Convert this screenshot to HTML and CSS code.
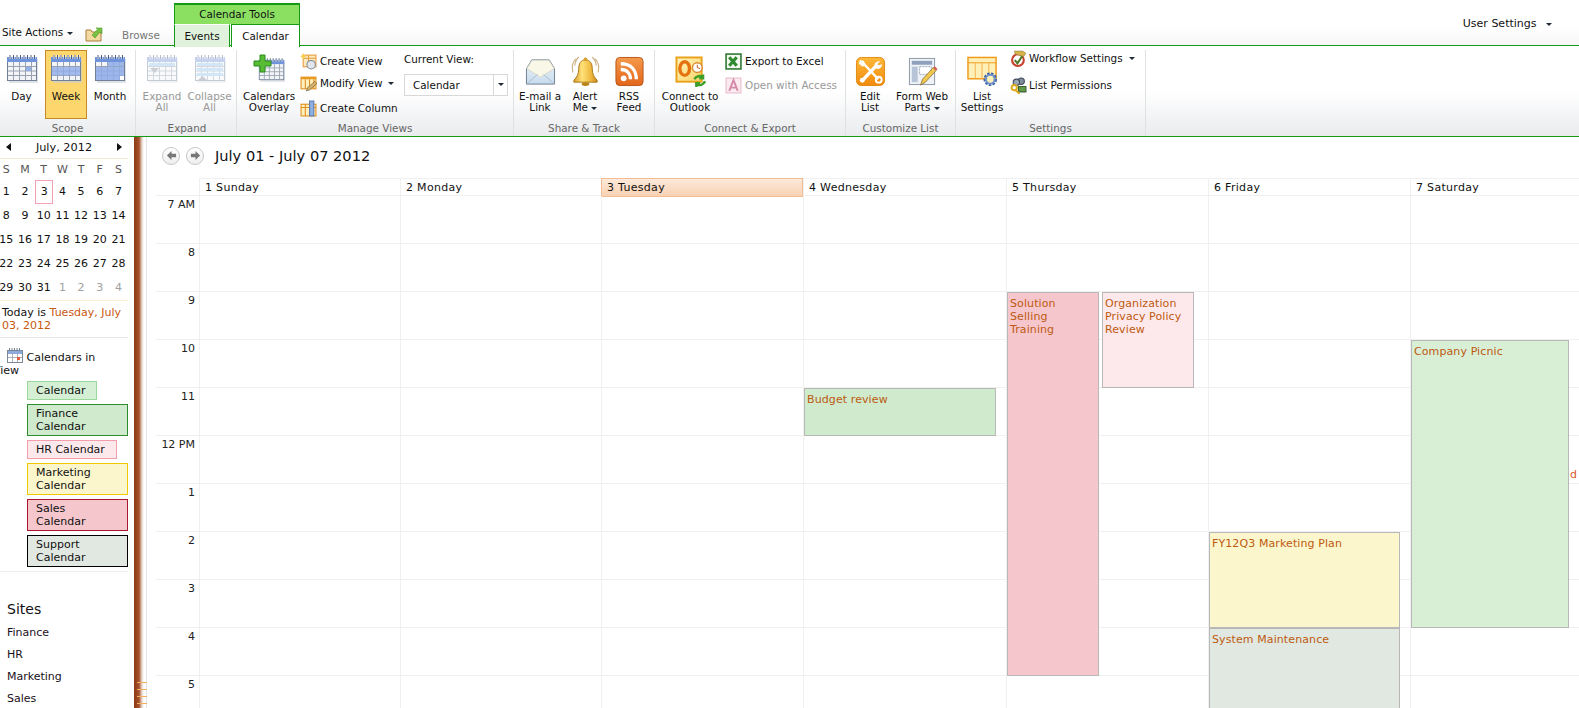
FILE: index.html
```html
<!DOCTYPE html>
<html lang="en">
<head>
<meta charset="utf-8">
<title>Calendar - Week</title>
<link rel="stylesheet" href="styles.css">
</head>
<body>
<svg class="defs" width="0" height="0" aria-hidden="true">
  <defs>
    <linearGradient id="goldGrad" x1="0" y1="0" x2="1" y2="0"><stop offset="0" stop-color="#d8982a"/><stop offset=".35" stop-color="#ffe27a"/><stop offset=".75" stop-color="#edb63a"/><stop offset="1" stop-color="#c58a1c"/></linearGradient>
    <linearGradient id="orangeGrad" x1="0" y1="0" x2="0" y2="1"><stop offset="0" stop-color="#fdb83a"/><stop offset="1" stop-color="#f28a0c"/></linearGradient>
    <linearGradient id="rssGrad" x1="0" y1="0" x2="0" y2="1"><stop offset="0" stop-color="#f49a4c"/><stop offset="1" stop-color="#e2661a"/></linearGradient>
    <linearGradient id="mailGrad" x1="0" y1="0" x2="0" y2="1"><stop offset="0" stop-color="#eef4f8"/><stop offset="1" stop-color="#c7dbee"/></linearGradient>
    <linearGradient id="olGrad" x1="0" y1="0" x2="1" y2="1"><stop offset="0" stop-color="#fff4bd"/><stop offset="1" stop-color="#fbd466"/></linearGradient>
    <symbol id="cal" viewBox="0 0 32 28">
      <rect x="3" y="4" width="29" height="24" fill="#c9ced6" opacity=".6"/>
      <rect x="1.5" y="2.5" width="29" height="23" fill="#f2f4f8" stroke="#6f7f96"/>
      <rect x="1" y="2" width="30" height="5" fill="#6f94dc"/>
      <path d="M4 0v4M7.500 0v4M11 0v4M14.500 0v4M18 0v4M21.500 0v4M25 0v4M28.500 0v4" stroke="#fff" stroke-width="2"/>
      <path d="M4 0v4M7.500 0v4M11 0v4M14.500 0v4M18 0v4M21.500 0v4M25 0v4M28.500 0v4" stroke="#4e5f7c"/>
      <path d="M7.500 7v18M13.500 7v18M19.500 7v18M25.500 7v18M2 11.500h28M2 16h28M2 20.500h28" stroke="#98a2b0"/>
    </symbol>
    <symbol id="folder" viewBox="0 0 18 16">
      <path d="M1 4h5l1 2h9v9H1z" fill="#f3d9a0" stroke="#a8803c"/>
      <path d="M7 9 13 3l-2-1h6v6l-2-2-5 6z" fill="#76c043" stroke="#4f9a23" stroke-width=".6"/>
    </symbol>
  </defs>
</svg>

<header class="topbar">
  <div class="site-actions">Site Actions <span class="caret"></span></div>
  <svg class="up-icon"><use href="#folder"/></svg>
  <div class="browse">Browse</div>
  <div class="ctx">
    <div class="ctx-title">Calendar Tools</div>
    <div class="ctx-tabs">
      <div class="tab-events">Events</div>
      <div class="tab-calendar">Calendar</div>
    </div>
  </div>
  <div class="user">User Settings <span class="caret user-caret"></span></div>
</header>

<section class="ribbon">
  <div class="group g-scope">
    <div class="group-body">
      <div class="lg w-day"><svg class="ic-cal"><use href="#cal"/><rect x="20" y="12" width="5" height="4" fill="#94b0ea"/></svg><span>Day</span></div>
      <div class="lg w-week on"><svg class="ic-cal"><use href="#cal"/><rect x="2" y="12" width="28" height="8.500" fill="#8fabe8" opacity=".8"/></svg><span>Week</span></div>
      <div class="lg w-month"><svg class="ic-cal"><use href="#cal"/><rect x="14" y="7" width="16" height="4.500" fill="#8fabe8" opacity=".85"/><rect x="2" y="12" width="28" height="13" fill="#8fabe8" opacity=".85"/><rect x="26" y="21" width="4" height="4" fill="#fff"/></svg><span>Month</span></div>
    </div>
    <div class="group-label">Scope</div>
  </div>
  <div class="group g-expand">
    <div class="group-body">
      <div class="lg w-exp off"><svg class="ic-cal"><use href="#cal"/><rect x="3" y="8" width="26" height="3" fill="#8fc4f0"/><path d="M4 13h9l-4.500 5z" fill="#7f8894"/></svg><span>Expand<br>All</span></div>
      <div class="lg w-col off"><svg class="ic-cal"><use href="#cal"/><rect x="3" y="8" width="26" height="3" fill="#8fc4f0"/><rect x="3" y="13" width="26" height="3" fill="#8fc4f0"/><rect x="3" y="18" width="26" height="3" fill="#8fc4f0"/><path d="M4 25h9l-4.500-4z" fill="#7f8894"/></svg><span>Collapse<br>All</span></div>
    </div>
    <div class="group-label">Expand</div>
  </div>
  <div class="group g-views">
    <div class="group-body">
      <div class="lg w-overlay">
        <svg class="ic-cal overlay-ic"><use href="#cal" x="5" y="4" width="27" height="24"/><path d="M7 1h5v6h6v5h-6v6H7v-6H1V7h6z" fill="#58bb34" stroke="#2a8a1c"/></svg>
        <span>Calendars<br>Overlay</span>
      </div>
      <div class="small-col views-col">
        <div class="sm"><svg class="ic-sm" viewBox="0 0 16 16"><rect x="3" y="2" width="12" height="11" fill="#fdeac0" stroke="#e89a3a"/><path d="M3 5h12M8 2v11" stroke="#e89a3a"/><circle cx="10.500" cy="11" r="4" fill="#dfe5ea" stroke="#7d8894"/><path d="M3 0l1 2 2 1-2 1-1 2-1-2-2-1 2-1z" fill="#f6cf4e"/></svg>Create View</div>
        <div class="sm"><svg class="ic-sm" viewBox="0 0 16 16"><rect x="1" y="2" width="14" height="11" fill="#fff0c0" stroke="#e08e1c"/><rect x="1" y="2" width="14" height="2" fill="#e89a1c"/><path d="M5 4v9M9 4v9M13 4v9" stroke="#e08e1c"/><path d="M6 15l1-3 7-6 2 2-7 6z" fill="#d6b26a" stroke="#6d5a3a" stroke-width=".6"/></svg>Modify View <span class="caret caret-gap"></span></div>
        <div class="sm"><svg class="ic-sm" viewBox="0 0 16 16"><rect x="1" y="4" width="14" height="11" fill="#fff0c0" stroke="#e08e1c"/><path d="M1 7h14M5 4v11M9 4v11" stroke="#e08e1c"/><rect x="9" y="1" width="4" height="14" fill="#8fb0e4" stroke="#5d7cb0"/></svg>Create Column</div>
      </div>
      <div class="current">
        <div class="current-label">Current View:</div>
        <div class="select"><span class="select-text">Calendar</span><span class="select-btn"><span class="caret"></span></span></div>
      </div>
    </div>
    <div class="group-label">Manage Views</div>
  </div>
  <div class="group g-share">
    <div class="group-body">
      <div class="lg w-mail"><svg class="ic-lg" viewBox="0 0 32 32"><path d="M1.500 13 7 4h18l5.500 9v16h-29z" fill="url(#mailGrad)" stroke="#6f7f90"/><path d="M2 13 7.300 4.500h17.400L30 13 16 22z" fill="#f8f7e8" stroke="#d8d8c8"/><path d="M2 28.500 13 19M30 28.500 19 19" stroke="#aebfd0"/></svg><span>E-mail a<br>Link</span></div>
      <div class="lg w-alert"><svg class="ic-lg" viewBox="0 0 32 32"><path d="M16 4c5 0 7 4 7 9 0 6 2 9 5 12v2H4v-2c3-3 5-6 5-12 0-5 2-9 7-9z" fill="url(#goldGrad)" stroke="#a8791a"/><circle cx="16" cy="3.500" r="2" fill="#d8a030"/><ellipse cx="16" cy="29" rx="4" ry="2" fill="#b98318"/><path d="M6 3C2 7 2 13 3 17M9 1C6 4 5 7 5 10M26 3c4 4 4 10 3 14M23 1c3 3 4 6 4 9" stroke="#cdb48a" fill="none" stroke-width="1.200"/></svg><span>Alert<br>Me <i class="caret"></i></span></div>
      <div class="lg w-rss"><svg class="ic-lg" viewBox="0 0 32 32"><rect x="2" y="1.500" width="28" height="29" rx="4" fill="url(#rssGrad)" stroke="#b9581b"/><circle cx="10" cy="23" r="3" fill="#fff"/><path d="M7 14c6 0 10 4 10 10M7 8c10 0 16 6 16 16" stroke="#fff" stroke-width="3.500" fill="none"/></svg><span>RSS<br>Feed</span></div>
    </div>
    <div class="group-label">Share &amp; Track</div>
  </div>
  <div class="group g-connect">
    <div class="group-body">
      <div class="lg w-outlook"><svg class="ic-lg" viewBox="0 0 32 32"><rect x="1.500" y="1.500" width="26" height="25" fill="url(#olGrad)" stroke="#e8a21c" stroke-width="2"/><ellipse cx="10" cy="13" rx="5" ry="7" fill="none" stroke="#e5720e" stroke-width="3.500"/><circle cx="23" cy="12" r="5" fill="#fff" stroke="#d88a30" stroke-width="1.500"/><path d="M23 9v3l3 1" stroke="#c8571a" fill="none"/><path d="M20 24a6 6 0 0 1 9-2M29 19v4h-4M31 26a6 6 0 0 1-9 3M22 32v-4h4" stroke="#3d9e28" stroke-width="2.500" fill="none"/></svg><span>Connect to<br>Outlook</span></div>
      <div class="small-col connect-col">
        <div class="sm"><svg class="ic-sm" viewBox="0 0 16 16"><rect x="1" y="1" width="14" height="14" fill="#f4f8f0" stroke="#2f7a34" stroke-width="1.500"/><path d="M4 4l7 8M11 4l-7 8" stroke="#2f8a2f" stroke-width="3"/></svg>Export to Excel</div>
        <div class="sm disabled"><svg class="ic-sm" viewBox="0 0 16 16"><rect x="1" y="1" width="14" height="14" fill="#fbeaf0" stroke="#e8bccd"/><path d="M4 13 8 3l4 10M5.500 10h5" stroke="#d48aa8" stroke-width="1.800" fill="none"/></svg>Open with Access</div>
      </div>
    </div>
    <div class="group-label">Connect &amp; Export</div>
  </div>
  <div class="group g-custom">
    <div class="group-body">
      <div class="lg w-edit"><svg class="ic-lg" viewBox="0 0 32 32"><rect x="1.500" y="1.500" width="29" height="29" rx="5" fill="url(#orangeGrad)" stroke="#e08a12"/><path d="M8 25 21 11" stroke="#fff" stroke-width="3.500"/><path d="M26 5.500a5 5 0 0 0-6 6l3 2a5 5 0 0 0 5-5l-3 1-2-1z" fill="#fff"/><circle cx="7.500" cy="25" r="2.500" fill="#fff"/><path d="M9 8l15 16" stroke="#fff" stroke-width="2.500"/><path d="M5 4l4 1 2 4-3 2-4-3z" fill="#fff"/><circle cx="24.500" cy="24.500" r="3" fill="none" stroke="#fff" stroke-width="2"/></svg><span>Edit<br>List</span></div>
      <div class="lg w-form"><svg class="ic-lg" viewBox="0 0 32 32"><rect x="2.500" y="2.500" width="26" height="27" fill="#eef1f5" stroke="#8c98a8"/><rect x="5" y="5" width="21" height="4" fill="#8ea0bb"/><rect x="5" y="11" width="6" height="16" fill="#b7c3d6"/><rect x="13" y="11" width="12" height="8" fill="#fff" stroke="#9aa8bb" stroke-dasharray="2 1"/><path d="M14 30l2-6 11-12 3 3-11 12z" fill="#f0c850" stroke="#7a5a2a" stroke-width=".7"/><path d="M27 12l1.500-1.500 3 3L30 15z" fill="#d8584a"/></svg><span>Form Web<br>Parts <i class="caret"></i></span></div>
    </div>
    <div class="group-label">Customize List</div>
  </div>
  <div class="group g-settings">
    <div class="group-body">
      <div class="lg w-lset"><svg class="ic-lg" viewBox="0 0 32 32"><rect x="1" y="1.500" width="29" height="22" fill="#fff0b8" stroke="#ee9a18" stroke-width="1.500"/><path d="M1 7h29" stroke="#ee9a18"/><path d="M8.500 7v17M15.500 7v17M22.500 7v17" stroke="#f3b04a"/><circle cx="24" cy="24" r="5.500" fill="#fff0b8" stroke="#3f66a8" stroke-width="3" stroke-dasharray="2.500 1.200"/><circle cx="24" cy="24" r="4.500" fill="none" stroke="#6f92cc" stroke-width="2"/></svg><span>List<br>Settings</span></div>
      <div class="small-col settings-col">
        <div class="sm"><svg class="ic-sm" viewBox="0 0 16 16"><circle cx="7.500" cy="9.500" r="5.500" fill="#fff" stroke="#c8402e" stroke-width="2"/><path d="M4.500 9.500l2.500 3 6-9" stroke="#4a7a2a" stroke-width="2" fill="none"/><path d="M4 1h8l3 2-2 3-8-2z" fill="#d8b24a" stroke="#8a7a40" stroke-width=".5"/></svg>Workflow Settings <span class="caret caret-gap"></span></div>
        <div class="sm"><svg class="ic-sm" viewBox="0 0 16 16"><circle cx="10.500" cy="4" r="3" fill="#7f8c9c" stroke="#3f4a58"/><circle cx="6" cy="5" r="3" fill="#9aa6b4" stroke="#3f4a58"/><path d="M8 14V9h7v5z" fill="#5f9a4a" stroke="#3c5f30"/><circle cx="4" cy="10" r="2.500" fill="none" stroke="#dcaa1c" stroke-width="1.800"/><path d="M5 12l4 4" stroke="#dcaa1c" stroke-width="1.800"/></svg>List Permissions</div>
      </div>
    </div>
    <div class="group-label">Settings</div>
  </div>
</section>

<main class="main">
  <nav class="side">
    <div class="mini-head"><span class="arrow-l"></span><span>July, 2012</span><span class="arrow-r"></span></div>
    <div class="mini-grid mini-dow"><span>S</span><span>M</span><span>T</span><span>W</span><span>T</span><span>F</span><span>S</span></div>
    <div class="mini-grid mini-days">
      <span>1</span><span>2</span><span class="today">3</span><span>4</span><span>5</span><span>6</span><span>7</span>
      <span>8</span><span>9</span><span>10</span><span>11</span><span>12</span><span>13</span><span>14</span>
      <span>15</span><span>16</span><span>17</span><span>18</span><span>19</span><span>20</span><span>21</span>
      <span>22</span><span>23</span><span>24</span><span>25</span><span>26</span><span>27</span><span>28</span>
      <span>29</span><span>30</span><span>31</span><span class="next">1</span><span class="next">2</span><span class="next">3</span><span class="next">4</span>
    </div>
    <div class="today-line">Today is <span class="today-link">Tuesday, July 03, 2012</span></div>
    <div class="civ">
      <svg class="civ-icon" viewBox="0 0 16 15"><rect x=".5" y="2.500" width="15" height="12" fill="#fff" stroke="#7f8a99"/><rect x="1" y="3" width="14" height="3" fill="#8fa9dd"/><path d="M2.500 0v3M5 0v3M7.500 0v3M10 0v3M12.500 0v3" stroke="#6f7d92"/><path d="M5.500 6v8M10.500 6v8M1 9.500h14" stroke="#a9b1bb"/><rect x="10" y="9" width="3" height="3" fill="#e25b3a"/></svg> Calendars in<br>View
    </div>
    <ul class="legend">
      <li class="lg-cal fit">Calendar</li>
      <li class="lg-fin">Finance<br>Calendar</li>
      <li class="lg-hr fit">HR Calendar</li>
      <li class="lg-mkt">Marketing<br>Calendar</li>
      <li class="lg-sal">Sales<br>Calendar</li>
      <li class="lg-sup">Support<br>Calendar</li>
    </ul>
    <div class="sites">
      <h2 class="sites-title">Sites</h2>
      <div class="site">Finance</div>
      <div class="site">HR</div>
      <div class="site">Marketing</div>
      <div class="site">Sales</div>
    </div>
  </nav>
  <div class="strip"><div class="strip-grip"></div></div>
  <section class="content">
    <div class="cal-nav">
      <span class="circle"><svg viewBox="0 0 12 12" class="nav-ic"><path d="M1 6l5-5v3h5v4H6v3z" fill="#777"/></svg></span>
      <span class="circle"><svg viewBox="0 0 12 12" class="nav-ic"><path d="M11 6 6 1v3H1v4h5v3z" fill="#777"/></svg></span>
      <span class="cal-title">July 01 - July 07 2012</span>
    </div>
    <div class="week">
      <div class="head-row">
        <div class="corner"></div>
        <div class="dh d1">1 Sunday</div>
        <div class="dh d2">2 Monday</div>
        <div class="dh d3 dh-today">3 Tuesday</div>
        <div class="dh d4">4 Wednesday</div>
        <div class="dh d5">5 Thursday</div>
        <div class="dh d6">6 Friday</div>
        <div class="dh d7">7 Saturday</div>
      </div>
      <div class="body-row">
        <div class="hours">
          <div class="hour">7 AM</div><div class="hour">8</div><div class="hour">9</div><div class="hour">10</div>
          <div class="hour">11</div><div class="hour">12 PM</div><div class="hour">1</div><div class="hour">2</div>
          <div class="hour">3</div><div class="hour">4</div><div class="hour">5</div>
        </div>
        <div class="day d1"></div>
        <div class="day d2"></div>
        <div class="day d3"></div>
        <div class="day d4">
          <div class="ev ev-budget">Budget review</div>
        </div>
        <div class="day d5">
          <div class="ev ev-solution">Solution<br>Selling<br>Training</div>
          <div class="ev ev-privacy">Organization<br>Privacy Policy<br>Review</div>
        </div>
        <div class="day d6">
          <div class="ev ev-plan">FY12Q3 Marketing Plan</div>
          <div class="ev ev-maint">System Maintenance</div>
        </div>
        <div class="day d7">
          <div class="ev ev-picnic">Company Picnic</div>
          <span class="stray">d</span>
        </div>
      </div>
    </div>
  </section>
</main>
</body>
</html>
```

FILE: styles.css
```css
* { box-sizing: border-box; }
html, body { margin: 0; padding: 0; height: 708px; overflow: hidden; background: #fff; }
body { font-family: "DejaVu Sans", Verdana, sans-serif; font-size: 11px; color: #111; line-height: 13px; }
.defs { position: absolute; }
.caret { display: inline-block; width: 0; height: 0; border: 3px solid transparent; border-top: 3px solid #1f2a36; border-bottom: 0; vertical-align: middle; }

/* Top bar */
.topbar { position: relative; height: 46px; display: flex; background: linear-gradient(#fff 0, #fff 28px, #f6f6f6 45px); border-bottom: 1px solid #159a15; }
.site-actions { width: 85px; padding: 26px 0 0 2px; font-size: 10.4px; white-space: nowrap; }
.up-icon { width: 18px; height: 16px; margin: 26px 0 0 0; }
.browse { width: 52px; margin: 29px 0 0 19px; color: #777; font-size: 10.4px; }
.ctx { margin-top: 3px; width: 126px; height: 43px; display: flex; flex-direction: column; position: relative; z-index: 2; }
.ctx-title { height: 21px; background: #8be062; border: 1px solid #159a15; border-top-width: 2px; border-bottom: 0; text-align: center; font-size: 10.4px; line-height: 19px; }
.ctx-tabs { display: flex; height: 23px; font-size: 10.4px; }
.tab-events { width: 56px; background: #e0f1dc; border: 1px solid #159a15; border-bottom: 0; border-top-color: #fff; text-align: center; line-height: 22px; }
.tab-calendar { flex: 1; margin-left: 1px; background: #fff; border: 1px solid #159a15; border-bottom: 0; border-top-width: 1px; text-align: center; line-height: 22px; }
.user { margin-left: auto; margin-right: 27px; padding-top: 17px; font-size: 11px; white-space: nowrap; }
.user-caret { margin-left: 6px; }

/* Ribbon */
.ribbon { height: 91px; display: flex; background: linear-gradient(#fff 0, #fff 46px, #f5f6f7 65px, #e9ebed 90px); border-bottom: 1px solid #159a15; font-size: 10.4px; }
.group { display: flex; flex-direction: column; border-right: 1px solid #dfe1e3; margin-top: 4px; }
.group-body { display: flex; flex: 1; min-height: 0; }
.group-label { height: 15px; text-align: center; color: #666; line-height: 15px; white-space: nowrap; }
.g-scope { width: 136px; }
.g-expand { width: 101px; padding-left: 2px; }
.g-views { width: 277px; }
.g-share { width: 141px; }
.g-connect { width: 191px; }
.g-custom { width: 110px; }
.g-settings { width: 190px; }
.lg { display: flex; flex-direction: column; align-items: center; padding-top: 4px; text-align: center; line-height: 11px; white-space: nowrap; height: 69px; }
.lg > span { margin-top: 8px; }
.lg i { font-style: normal; }
.ic-cal { width: 32px; height: 28px; flex: none; margin-top: 1px; }
.ic-lg { width: 31px; height: 31px; flex: none; margin-top: 2px; }
.lg .ic-lg + span { margin-top: 4px; }
.w-day { width: 41px; margin-left: 1px; }
.w-week { width: 42px; margin-left: 3px; background: #fdd76e; border: 1px solid #c58a28; padding-top: 3px; }
.w-month { width: 44px; margin-left: 1px; }
.off { color: #999; }
.off svg { opacity: .4; }
.w-exp { width: 48px; }
.w-col { width: 47px; }
.w-overlay { width: 52px; margin-left: 6px; }
.overlay-ic { margin-top: 0; }
.overlay-ic + span { margin-top: 9px !important; }
.small-col { display: flex; flex-direction: column; white-space: nowrap; }
.sm { display: flex; align-items: center; height: 22px; flex: none; }
.ic-sm { width: 17px; height: 17px; margin-right: 3px; flex: none; }
.caret-gap { margin-left: 6px; }
.disabled { color: #999; }
.views-col { margin: 0 0 0 5px; width: 104px; }
.views-col .sm:nth-child(3) { margin-top: 3px; }
.current { width: 104px; padding-top: 2px; }
.current-label { height: 22px; line-height: 15px; }
.select { display: flex; height: 22px; border: 1px solid #d8d8d8; background: #fff; line-height: 20px; }
.select-text { flex: 1; padding-left: 8px; }
.select-btn { width: 14px; border-left: 1px solid #d8d8d8; text-align: center; line-height: 16px; }
.w-mail { width: 48px; margin-left: 2px; }
.w-alert { width: 42px; }
.w-rss { width: 46px; }
.w-outlook { width: 64px; margin-left: 3px; }
.connect-col { margin: 0 0 0 3px; }
.connect-col .sm:nth-child(2) { margin-top: 2px; }
.w-edit { width: 48px; margin-left: 0; }
.w-form { width: 56px; }
.w-lset { width: 52px; margin-left: 0; }
.settings-col { margin: -3px 0 0 2px; }
.settings-col .sm:nth-child(2) { margin-top: 5px; }
.settings-col .ic-sm { margin-right: 2px; }

/* Main */
.main { display: flex; height: 571px; overflow: hidden; }
.side { width: 134px; flex: none; overflow: visible; padding-top: 1px; position: relative; }
.mini-head { width: 128px; height: 21px; margin-right: 6px; display: flex; justify-content: space-between; align-items: center; padding: 0 6px 2px; border-bottom: 1px solid #efe8d4; font-size: 11.3px; }
.arrow-l, .arrow-r { width: 0; height: 0; border: 4px solid transparent; }
.arrow-l { border-right: 5px solid #111; border-left: 0; }
.arrow-r { border-left: 5px solid #111; border-right: 0; }
.mini-grid { display: grid; grid-template-columns: repeat(7, 18.7px); margin-left: -3px; width: 131px; text-align: center; }
.mini-dow { height: 21px; line-height: 21px; color: #555; }
.mini-days { grid-auto-rows: 24px; line-height: 24px; padding-bottom: 0; border-bottom: 1px solid #fbf3d4; height: 121px; }
.mini-days .today { border: 1px solid #f3a3b5; margin: 0 0 0 1px; line-height: 22px; }
.next { color: #a0a0a0; }
.today-line { height: 37px; padding: 5px 0 0 2px; border-bottom: 1px solid #e6e6e6; width: 128px; }
.today-link { color: #c8570f; }
.civ { margin: 10px 0 0 -7px; width: 140px; text-indent: 14px; line-height: 13px; height: 33px; white-space: nowrap; }
.civ-icon { width: 16px; height: 15px; vertical-align: -2px; }
.legend { list-style: none; margin: 0; padding: 0 0 0 27px; width: 128px; height: 191px; border-bottom: 1px solid #ececec; display: flex; flex-direction: column; align-items: flex-start; gap: 4px; }
.legend li { padding: 2px 8px; border: 1px solid #000; width: 101px; }
.legend .fit { width: auto; white-space: nowrap; padding-right: 11px; }
.legend .lg-cal { background: #d5efd5; border-color: #9bd89b; }
.legend .lg-fin { background: #cfeacc; border-color: #2e8b2e; }
.legend .lg-hr { background: #fde9ec; border-color: #f29cac; }
.legend .lg-mkt { background: #fbf6cc; border-color: #eec900; }
.legend .lg-sal { background: #f6c6cd; border-color: #a8172e; }
.legend .lg-sup { background: #e1e8e1; border-color: #000; }
.sites { padding: 29px 0 0 7px; }
.sites-title { margin: 0 0 5px; font-size: 14px; font-weight: normal; line-height: 16px; }
.site { height: 22px; line-height: 22px; color: #1a1020; }

.strip { width: 13px; flex: none; display: flex; flex-direction: column; justify-content: flex-end; background: linear-gradient(to right, #8b3a14 0, #a5502a 5px, #e9d9d0 8px, #fff 10px, #fff 12px, #dfe5ea 12px); }
.strip-grip { height: 25px; margin-left: 3px; margin-bottom: 1px; background: repeating-linear-gradient(#f0b060 0 1px, transparent 1px 7px); }

.content { flex: 1; min-width: 0; padding-left: 9px; overflow: hidden; }
.cal-nav { height: 41px; display: flex; align-items: center; padding: 0 0 4px 6px; }
.circle { width: 18px; height: 18px; border-radius: 50%; border: 1px solid #c6c6c6; background: linear-gradient(#fff, #eee); display: flex; align-items: center; justify-content: center; margin-right: 6px; }
.nav-ic { width: 11px; height: 11px; }
.cal-title { margin-left: 5px; font-size: 14.6px; }
.week { width: 1423px; }
.head-row, .body-row { display: grid; grid-template-columns: 43px 201px 201px 202px 203px 202px 202px 169px; }
.head-row { height: 18px; border-bottom: 1px solid #f0f0f0; }
.dh { border-top: 1px solid #f0f0f0; border-left: 1px solid #f0f0f0; padding-left: 5px; line-height: 17px; white-space: nowrap; letter-spacing: .3px; }
.dh-today { background: linear-gradient(#fde9da, #f9d2b3); border: 1px solid #f2bd93; }
.hour { height: 48px; border-bottom: 1px solid #f0f0f0; text-align: right; padding: 2px 4px 0 0; color: #222; }
.day { position: relative; height: 528px; border-left: 1px solid #f0f0f0; background: repeating-linear-gradient(transparent 0 47px, #f0f0f0 47px 48px); }
.ev { position: absolute; padding: 4px 2px; border: 1px solid #b8b8b8; color: #bd5a10; letter-spacing: .1px; }
.ev-budget { left: 0; top: 192px; width: 192px; height: 48px; background: #cfeacc; }
.ev-solution { left: 0; top: 96px; width: 92px; height: 384px; background: #f6c6cd; }
.ev-privacy { left: 95px; top: 96px; width: 92px; height: 96px; background: #fde9ec; }
.ev-plan { left: 0; top: 336px; width: 191px; height: 96px; background: #fbf6cc; }
.ev-maint { left: 0; top: 432px; width: 191px; height: 100px; background: #e1e8e1; }
.ev-picnic { left: 0; top: 144px; width: 158px; height: 288px; background: #d8efd6; }
.stray { position: absolute; left: 159px; top: 272px; color: #d9562b; }
```
